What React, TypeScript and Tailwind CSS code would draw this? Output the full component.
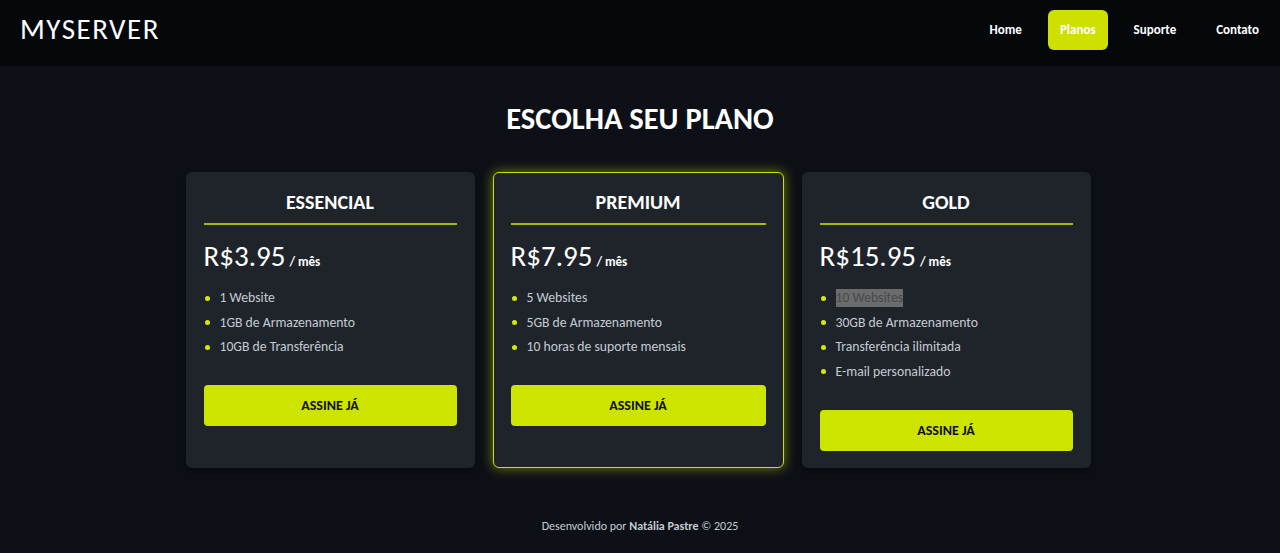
import React from "react";

type Plan = {
  name: string;
  price: string;
  features: string[];
  featured?: boolean;
  marked?: number;
};

const plans: Plan[] = [
  { name: "ESSENCIAL", price: "R$3.95", features: ["1 Website", "1GB de Armazenamento", "10GB de Transferência"] },
  { name: "PREMIUM", price: "R$7.95", features: ["5 Websites", "5GB de Armazenamento", "10 horas de suporte mensais"], featured: true },
  {
    name: "GOLD",
    price: "R$15.95",
    features: ["10 Websites", "30GB de Armazenamento", "Transferência ilimitada", "E-mail personalizado"],
    marked: 0,
  },
];

const font = { fontFamily: '"Carlito", "Lato", "Open Sans", sans-serif' };

function PlanCard({ plan }: { plan: Plan }) {
  return (
    <div
      className={
        "flex flex-col rounded-md bg-[#1f242b] px-[17px] pt-[17px] pb-[16px] " +
        (plan.featured
          ? "border border-[#cde000] shadow-[0_0_12px_rgba(205,224,0,0.55)]"
          : "border border-transparent shadow-[0_4px_10px_rgba(0,0,0,0.45)]")
      }
    >
      <h2 className="text-center text-[20px] font-bold leading-[24px] text-white">{plan.name}</h2>
      <div className="mt-[9px] h-[2px] bg-[#a9b80c]" />
      <div className="mt-[13px] flex items-baseline text-white">
        <span className="text-[29px] leading-[36px]">{plan.price}</span>
        <span className="ml-[4px] text-[13px] font-semibold">/ mês</span>
      </div>
      <ul className="mt-[15px] flex flex-col gap-[6.5px]">
        {plan.features.map((f, i) => (
          <li key={f} className="flex items-center text-[13.7px] leading-[18px] text-[#c4cbd3]">
            <span className="ml-[1px] mr-[10px] h-[5px] w-[5px] rounded-full bg-[#d6ea00]" />
            {plan.marked === i ? (
              <span className="bg-[#6b6c6e] text-[#454a50]">{f}</span>
            ) : (
              f
            )}
          </li>
        ))}
      </ul>
      <button className="mt-[29px] h-[41px] w-full rounded-[4px] bg-[#cde300] text-[14px] font-bold text-[#111]">
        ASSINE JÁ
      </button>
    </div>
  );
}

export default function App() {
  return (
    <div className="min-h-[553px] bg-[#0d1117]" style={font}>
      <header className="flex h-[66px] items-center justify-between bg-[#05080b] pb-[6px] pl-[20px] pr-[21px]">
        <div className="text-[29px] tracking-[1.5px] text-white">MYSERVER</div>
        <nav className="flex items-center gap-[2px] text-[13px] font-semibold text-white">
          <a className="px-[14px] py-[11px]">Home</a>
          <a className="ml-[10px] rounded-md bg-[#cde000] px-[12px] py-[11px] leading-[18px]">Planos</a>
          <a className="ml-[10px] px-[14px] py-[11px]">Suporte</a>
          <a className="ml-[10px] px-[14px] py-[11px] pr-0">Contato</a>
        </nav>
      </header>

      <main className="flex flex-col items-center pt-[35px]">
        <h1 className="text-[30.5px] font-bold leading-[36px] text-white">ESCOLHA SEU PLANO</h1>
        <div className="mr-[4px] mt-[35px] grid grid-cols-[289px_291px_289px] gap-[18px]">
          {plans.map((p) => (
            <PlanCard key={p.name} plan={p} />
          ))}
        </div>
      </main>

      <footer className="mt-[49px] text-center text-[12px] text-[#c4cbd3]">
        Desenvolvido por <span className="font-bold">Natália Pastre</span> © 2025
      </footer>
    </div>
  );
}
